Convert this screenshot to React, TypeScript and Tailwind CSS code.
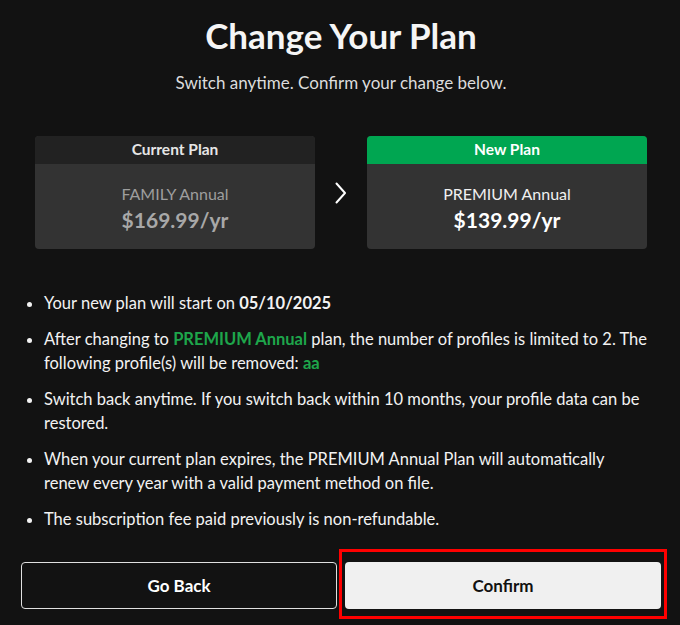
const currentPlan = { name: 'FAMILY Annual', price: '$169.99/yr' }
const newPlan = { name: 'PREMIUM Annual', price: '$139.99/yr' }

function ChevronRight() {
  return (
    <svg width="12" height="22" viewBox="0 0 12 22" fill="none" className="text-white">
      <path d="M1.5 1.5 L10 11 L1.5 20.5" stroke="currentColor" strokeWidth="2" strokeLinecap="round" strokeLinejoin="round" />
    </svg>
  )
}

export default function App() {
  return (
    <div className="relative min-h-screen bg-[#121212] font-['Lato',sans-serif] text-white">
      <div className="ml-[21px] w-[640px] pt-[13px]">
        {/* Header */}
        <h1 className="text-center text-[35px] font-bold leading-[44px] text-[#f5f5f5]">Change Your Plan</h1>
        <p className="mt-[14px] text-center text-[17px] leading-[24px] text-[#dcdcdc]">
          Switch anytime. Confirm your change below.
        </p>

        {/* Plan cards */}
        <div className="mt-[41px] flex items-center justify-center">
          <div className="w-[280px] overflow-hidden rounded-[4px] bg-[#333333]">
            <div className="flex h-[28px] items-center justify-center bg-[#222222] text-[15.5px] font-bold text-[#e6e6e6]">
              Current Plan
            </div>
            <div className="flex flex-col items-center pb-[15px] pt-[18px]">
              <div className="text-[16px] leading-[24px] text-[#9e9e9e]">{currentPlan.name}</div>
              <div className="text-[21px] font-bold leading-[28px] text-[#a8a8a8]">{currentPlan.price}</div>
            </div>
          </div>
          <div className="flex w-[52px] justify-center">
            <ChevronRight />
          </div>
          <div className="w-[280px] overflow-hidden rounded-[4px] bg-[#333333]">
            <div className="flex h-[28px] items-center justify-center bg-[#00a651] text-[15.5px] font-bold text-white">
              New Plan
            </div>
            <div className="flex flex-col items-center pb-[15px] pt-[18px]">
              <div className="text-[16px] leading-[24px] text-[#f0f0f0]">{newPlan.name}</div>
              <div className="text-[21px] font-bold leading-[28px] text-white">{newPlan.price}</div>
            </div>
          </div>
        </div>

        {/* Details */}
        <ul className="mt-[42px] flex list-disc flex-col gap-[12px] pl-[23px] pr-[11px] text-[16.5px] leading-[24px] text-[#f2f2f2]">
          <li>
            Your new plan will start on <span className="font-bold">05/10/2025</span>
          </li>
          <li>
            After changing to <span className="font-bold text-[#1ea64b]">PREMIUM Annual</span> plan, the number of
            profiles is limited to 2. The following profile(s) will be removed:{' '}
            <span className="font-bold text-[#1ea64b]">aa</span>
          </li>
          <li>Switch back anytime. If you switch back within 10 months, your profile data can be restored.</li>
          <li>
            When your current plan expires, the PREMIUM Annual Plan will automatically renew every year with a valid
            payment method on file.
          </li>
          <li>The subscription fee paid previously is non-refundable.</li>
        </ul>

        {/* Actions */}
        <div className="mt-[31px] grid grid-cols-2 gap-2">
          <button className="h-[47px] rounded-[4px] border border-[#e0e0e0] text-[17px] font-bold text-white">
            Go Back
          </button>
          <button className="h-[47px] rounded-[4px] bg-[#f0f0f0] text-[17px] font-bold text-[#111111]">Confirm</button>
        </div>
      </div>

      {/* Screenshot annotation box */}
      <div className="pointer-events-none absolute left-[339px] top-[549px] h-[70px] w-[328px] border-[3px] border-[#ff0000]" />
    </div>
  )
}
